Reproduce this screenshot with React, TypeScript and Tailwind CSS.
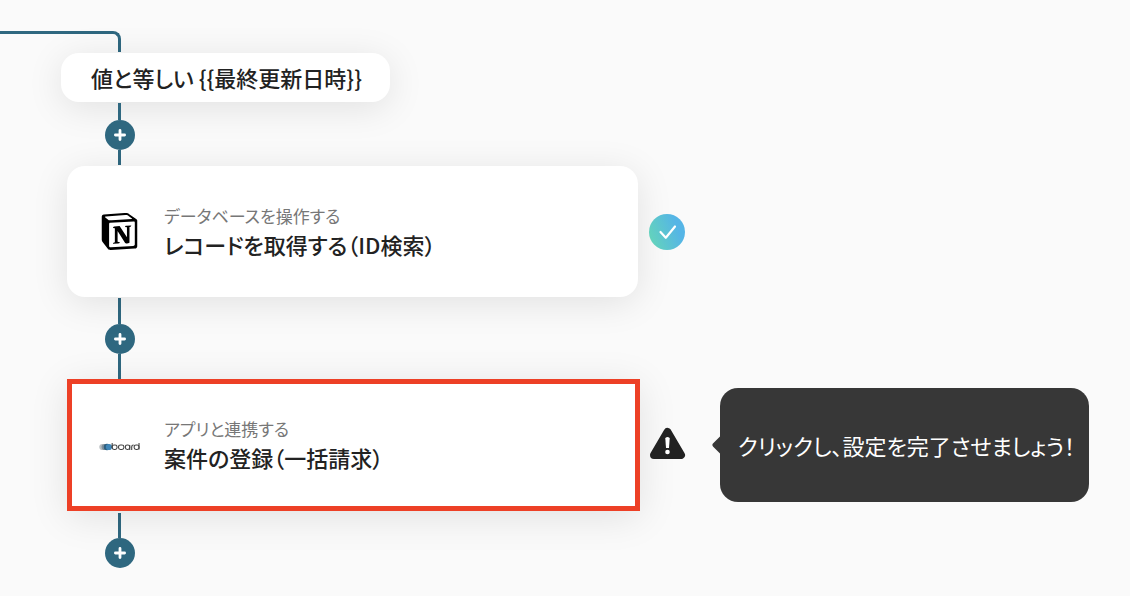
import type { ReactNode } from "react";
import { SiNotion } from "react-icons/si";

type Step = {
  id: string;
  action: string;
  title: string;
  logo: ReactNode;
  done: boolean;
};

function BoardLogo() {
  return (
    <svg viewBox="0 0 42 12" className="mt-1 h-3 w-[42px]" role="img" aria-label="board">
      <circle cx="3.5" cy="6" r="3.2" fill="#b9bec1" />
      <circle cx="5.8" cy="6" r="3.2" fill="#7f8f99" />
      <circle cx="8.2" cy="6" r="3.3" fill="#2d5f80" />
      <circle cx="10.2" cy="6" r="3.2" fill="#3f86b8" />
      <g fill="none" stroke="#444" strokeWidth="1.1">
        <path d="M13.5 2v5" />
        <rect x="13.5" y="4" width="5" height="4.5" rx="2" />
        <rect x="20" y="4" width="5.5" height="4.5" rx="2" />
        <rect x="27" y="4" width="4.5" height="4.5" rx="2" />
        <path d="M31.5 4v5M33.5 9V6q0-2 2-2" />
        <rect x="36" y="4" width="5" height="4.5" rx="2" />
        <path d="M41 2v6.5" />
      </g>
    </svg>
  );
}

function CheckIcon() {
  return (
    <svg viewBox="0 0 36 36" className="size-9" role="img" aria-label="設定済み">
      <defs>
        <linearGradient id="done" x1="0" y1="0.7" x2="1" y2="0.3">
          <stop offset="0.05" stopColor="#63d2bd" />
          <stop offset="0.8" stopColor="#55b5e6" />
        </linearGradient>
      </defs>
      <circle cx="18" cy="18" r="18" fill="url(#done)" />
      <path
        d="M11.5 18l5.3 5.8L26 12.5"
        fill="none"
        stroke="#fff"
        strokeWidth="2.2"
        strokeLinecap="round"
        strokeLinejoin="round"
      />
    </svg>
  );
}

function WarningIcon() {
  return (
    <svg viewBox="0 0 36 36" className="size-9" role="img" aria-label="未設定">
      <path
        d="M17.5 5L31 28H4z"
        fill="#222"
        stroke="#222"
        strokeWidth="8"
        strokeLinejoin="round"
      />
      <path d="M15.3 11.5q0-1.5 2.2-1.5t2.2 1.5l-.7 9.5h-3z" fill="#fff" />
      <circle cx="17.5" cy="25" r="2.3" fill="#fff" />
    </svg>
  );
}

const steps: Step[] = [
  {
    id: "notion",
    action: "データベースを操作する",
    title: "レコードを取得する（ID検索）",
    logo: <SiNotion className="size-[37px] shrink-0 text-black" />,
    done: true,
  },
  {
    id: "board",
    action: "アプリと連携する",
    title: "案件の登録（一括請求）",
    logo: <BoardLogo />,
    done: false,
  },
];

function AddNode() {
  return (
    <button
      type="button"
      aria-label="ステップを追加"
      className="flex size-[30px] items-center justify-center rounded-full bg-[#2f6880]"
    >
      <svg viewBox="0 0 12 12" className="size-3" stroke="#fff" strokeWidth="2.8" strokeLinecap="round">
        <path d="M6 1.4v9.2M1.4 6h9.2" />
      </svg>
    </button>
  );
}

function Line({ className }: { className: string }) {
  return <div className={`ml-[13px] w-[3px] bg-[#2f6880] ${className}`} />;
}

function StepRow({ step }: { step: Step }) {
  return (
    <div className="flex items-center">
      <button
        type="button"
        className={`flex w-full items-center bg-white text-left shadow-[0_6px_36px_rgba(0,0,0,0.1)] ${
          step.done
            ? "h-[131px] max-w-[571px] rounded-[18px] pl-8"
            : "h-[132px] max-w-[573px] border-[5px] border-[#ed4026] pl-[27px]"
        }`}
      >
        <span className="flex w-[41px] shrink-0 justify-center">{step.logo}</span>
        <span className="ml-6 flex flex-col pb-1">
          <span className="text-[17px] leading-[28px] text-[#777]">{step.action}</span>
          <span className="text-[22px] leading-[28px] font-medium text-[#222]">{step.title}</span>
        </span>
      </button>
      <div className={`shrink-0 ${step.done ? "ml-[11px]" : "ml-[10px]"}`}>
        {step.done ? <CheckIcon /> : <WarningIcon />}
      </div>
      {!step.done && (
        <div
          role="tooltip"
          className="relative ml-[34px] flex h-[114px] shrink-0 items-center rounded-[18px] bg-[#373737] pr-3.5 pl-[18px] text-[22px] leading-[30px] text-white"
        >
          <svg viewBox="0 0 8 20" className="absolute top-[47px] -left-2 h-5 w-2" fill="#373737">
            <path d="M8 1.5L1.2 8.3q-1.7 1.7 0 3.4L8 18.5z" />
          </svg>
          クリックし、設定を完了させましょう！
        </div>
      )}
    </div>
  );
}

export default function App() {
  return (
    <main className="min-h-screen overflow-hidden bg-[#fafafa] pt-[31px] font-['Noto_Sans_CJK_JP',sans-serif] [font-feature-settings:'palt']">
      <div className="h-[21px] w-[121px] rounded-tr-[8px] border-t-[3px] border-r-[3px] border-[#2f6880]" />
      <div className="my-px ml-[61px] flex h-[49px] w-fit items-center rounded-[18px] bg-white pr-7 pl-[30px] text-[22px] font-medium text-[#222] shadow-[0_6px_36px_rgba(0,0,0,0.1)]">
        {"値と等しい {{最終更新日時}}"}
      </div>
      <div className="ml-[105px]">
        <Line className="h-[17px]" />
        <AddNode />
        <Line className="h-[15px]" />
      </div>
      <div className="my-px ml-[67px]">
        <StepRow step={steps[0]} />
      </div>
      <div className="ml-[105px]">
        <Line className="h-[26px]" />
        <AddNode />
        <Line className="h-[25px]" />
      </div>
      <div className="ml-[67px]">
        <StepRow step={steps[1]} />
      </div>
      <div className="ml-[105px] pt-0.5">
        <Line className="h-[25px]" />
        <AddNode />
      </div>
    </main>
  );
}
